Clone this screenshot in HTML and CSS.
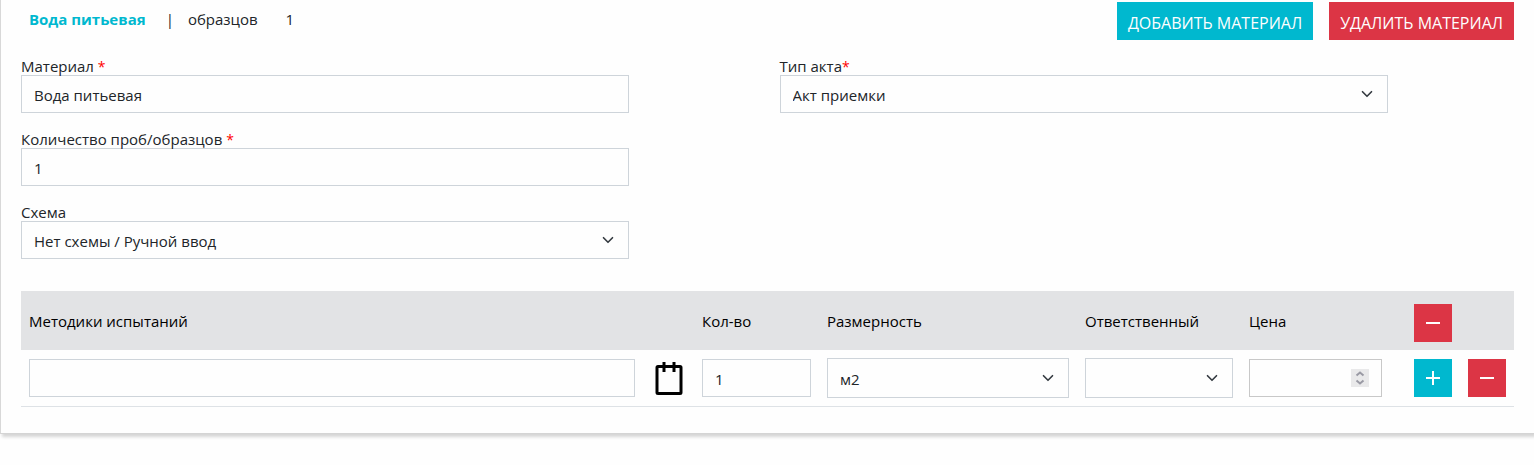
FILE: index.html
```
<!DOCTYPE html>
<html lang="ru">
<head>
<meta charset="utf-8">
<meta name="viewport" content="width=device-width, initial-scale=1">
<title>Вода питьевая</title>
<link rel="stylesheet" href="styles.css">
</head>
<body>
<section class="card">
  <header class="card-head">
    <div class="summary">
      <strong class="summary-name">Вода питьевая</strong>
      <span class="summary-bar">|</span>
      <span class="summary-label">образцов</span>
      <span>1</span>
    </div>
    <div class="actions">
      <button type="button" class="btn btn-add">ДОБАВИТЬ МАТЕРИАЛ</button>
      <button type="button" class="btn btn-remove">УДАЛИТЬ МАТЕРИАЛ</button>
    </div>
  </header>

  <form class="form">
    <div class="column">
      <div class="field">
        <label for="material">Материал <span class="required">*</span></label>
        <input class="control" id="material" type="text" value="Вода питьевая">
      </div>
      <div class="field">
        <label for="count">Количество проб/образцов <span class="required">*</span></label>
        <input class="control" id="count" type="text" value="1">
      </div>
      <div class="field">
        <label for="scheme">Схема</label>
        <div class="select">
          <select class="control" id="scheme"><option>Нет схемы / Ручной ввод</option></select>
          <svg class="chevron" viewBox="0 0 16 16" aria-hidden="true"><path d="M2 5l6 6 6-6"/></svg>
        </div>
      </div>
    </div>
    <div class="column">
      <div class="field">
        <label for="act">Тип акта<span class="required">*</span></label>
        <div class="select">
          <select class="control" id="act"><option>Акт приемки</option></select>
          <svg class="chevron" viewBox="0 0 16 16" aria-hidden="true"><path d="M2 5l6 6 6-6"/></svg>
        </div>
      </div>
    </div>
  </form>

  <table class="methods">
    <colgroup>
      <col>
      <col class="col-icon">
      <col class="col-qty">
      <col class="col-unit">
      <col class="col-person">
      <col class="col-price">
      <col class="col-btn">
      <col class="col-btn">
    </colgroup>
    <thead>
      <tr>
        <th scope="col" id="h-method">Методики испытаний</th>
        <th></th>
        <th scope="col" id="h-qty">Кол-во</th>
        <th scope="col" id="h-unit">Размерность</th>
        <th scope="col" id="h-person">Ответственный</th>
        <th scope="col" id="h-price">Цена</th>
        <th class="head-action">
          <button type="button" class="btn-icon btn-remove" aria-label="Удалить все">
            <svg viewBox="0 0 16 16" aria-hidden="true"><path d="M1 8h14"/></svg>
          </button>
        </th>
        <th></th>
      </tr>
    </thead>
    <tbody>
      <tr>
        <td><input class="control" type="text" aria-labelledby="h-method"></td>
        <td>
          <button type="button" class="clipboard" aria-label="Выбрать методику">
            <svg viewBox="0 0 28 34" aria-hidden="true">
              <rect class="sheet" x="2" y="5.500" width="24" height="27" rx="1"/>
              <path class="rings" d="M9 1v10M19 1v10"/>
            </svg>
          </button>
        </td>
        <td><input class="control" type="text" value="1" aria-labelledby="h-qty"></td>
        <td>
          <div class="select">
            <select class="control control-tall" aria-labelledby="h-unit"><option>м2</option></select>
            <svg class="chevron" viewBox="0 0 16 16" aria-hidden="true"><path d="M2 5l6 6 6-6"/></svg>
          </div>
        </td>
        <td>
          <div class="select">
            <select class="control control-tall" aria-labelledby="h-person"><option></option></select>
            <svg class="chevron" viewBox="0 0 16 16" aria-hidden="true"><path d="M2 5l6 6 6-6"/></svg>
          </div>
        </td>
        <td class="price-cell">
          <div class="number">
            <input class="control control-price" type="number" aria-labelledby="h-price">
            <svg class="spinner" viewBox="0 0 18 18" aria-hidden="true"><path d="M5.500 6.500L9 3.500l3.500 3M5.500 11.500l3.500 3 3.500-3"/></svg>
          </div>
        </td>
        <td>
          <button type="button" class="btn-icon btn-add" aria-label="Добавить строку">
            <svg viewBox="0 0 16 16" aria-hidden="true"><path d="M1 8h14M8 1v14"/></svg>
          </button>
        </td>
        <td>
          <button type="button" class="btn-icon btn-remove" aria-label="Удалить строку">
            <svg viewBox="0 0 16 16" aria-hidden="true"><path d="M1 8h14"/></svg>
          </button>
        </td>
      </tr>
    </tbody>
  </table>
</section>
</body>
</html>
```
FILE: styles.css
```
* {
  box-sizing: border-box;
}

body {
  margin: 0;
  min-height: 100vh;
  background: #fefefe;
  color: #212529;
  font-family: "Open Sans", "Noto Sans", sans-serif;
  font-size: 15px;
  line-height: 20px;
}

button,
input,
select {
  font: inherit;
  color: inherit;
}

.card {
  padding: 2px 20px 26px;
  border-left: 1px solid #d8d8d8;
  border-bottom: 1px solid #d4d4d4;
  box-shadow: 2px 3px 3px rgba(0, 0, 0, 0.16);
}

.card-head {
  display: flex;
  justify-content: space-between;
  align-items: flex-start;
}

.summary {
  display: flex;
  padding: 7px 8px;
}

.summary-name {
  color: #00b8cf;
}

.summary-bar {
  margin: 0 14px 0 20px;
}

.summary-label {
  margin-right: 28px;
}

.actions {
  display: flex;
  gap: 16px;
}

.btn {
  height: 38px;
  padding: 3px 11px 0;
  border: 0;
  color: #fefefe;
  font-size: 16px;
}

.btn-add {
  background: #00b8cf;
}

.btn-remove {
  background: #dc3545;
}

.form {
  display: grid;
  grid-template-columns: 1fr 1fr;
  column-gap: 24px;
  margin: 18px 0 32px;
}

.column {
  display: flex;
  flex-direction: column;
  gap: 18px;
  width: calc((100% + 24px) * 10 / 12 - 24px);
}

.field label {
  display: block;
  line-height: 17px;
}

.required {
  color: #f00;
  font-size: 14px;
}

.control {
  display: block;
  width: 100%;
  height: 38px;
  padding: 2px 12px 0;
  border: 1px solid #ced4da;
  border-radius: 0;
  background: #fefefe;
  appearance: none;
}

.control-tall {
  height: 40px;
}

.control-price {
  border-color: #c8c8c8;
  appearance: textfield;
}

.control-price::-webkit-inner-spin-button {
  appearance: none;
}

.select,
.number {
  position: relative;
}

.chevron {
  position: absolute;
  right: 15px;
  top: calc(50% - 6px);
  width: 12px;
  height: 12px;
  fill: none;
  stroke: #343a40;
  stroke-width: 2.2;
  stroke-linecap: round;
  stroke-linejoin: round;
  pointer-events: none;
}

.spinner {
  position: absolute;
  right: 13px;
  top: calc(50% - 9px);
  width: 18px;
  height: 18px;
  background: #e9e9ea;
  fill: none;
  stroke: #9a9aa4;
  stroke-width: 2;
  pointer-events: none;
}

.methods {
  width: 100%;
  table-layout: fixed;
  border-collapse: collapse;
}

.methods th {
  height: 59px;
  padding: 0 8px;
  background: #e2e3e5;
  color: #000;
  font-weight: 400;
  text-align: left;
  vertical-align: middle;
}

.methods .head-action {
  padding-top: 4px;
}

.methods td {
  padding: 8px;
  border-bottom: 1px solid #dee2e6;
  vertical-align: middle;
}

.methods .price-cell {
  padding-right: 24px;
}

.col-icon {
  width: 51px;
}

.col-qty {
  width: 125px;
}

.col-unit {
  width: 258px;
}

.col-person {
  width: 164px;
}

.col-price {
  width: 165px;
}

.col-btn {
  width: 54px;
}

.btn-icon {
  display: flex;
  align-items: center;
  justify-content: center;
  width: 38px;
  height: 38px;
  padding: 0;
  border: 0;
}

.btn-icon svg {
  width: 16px;
  height: 16px;
  fill: none;
  stroke: #fefefe;
  stroke-width: 2;
}

.clipboard {
  display: flex;
  margin: 0 auto;
  padding: 0;
  border: 0;
  background: none;
}

.clipboard svg {
  width: 28px;
  height: 34px;
  fill: none;
  stroke: #000;
}

.sheet {
  stroke-width: 3;
}

.rings {
  stroke-width: 3;
}
```
